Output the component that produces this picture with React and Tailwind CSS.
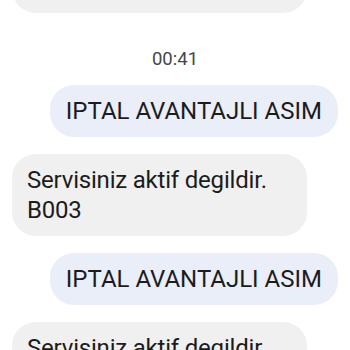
const messages = [
  { id: 1, from: "them", lines: ["Servisiniz aktif degildir.", "B003"] },
  { id: 2, time: "00:41" },
  { id: 3, from: "me", lines: ["IPTAL AVANTAJLI ASIM"] },
  { id: 4, from: "them", lines: ["Servisiniz aktif degildir.", "B003"] },
  { id: 5, from: "me", lines: ["IPTAL AVANTAJLI ASIM"] },
  { id: 6, from: "them", lines: ["Servisiniz aktif degildir.", "B003"] },
];

const Bubble = ({ msg, className = "" }) => {
  if (msg.time) {
    return (
      <div className="mt-[34px] mb-[14px] text-center text-[18.5px] leading-[24px] text-[#444746]">
        {msg.time}
      </div>
    );
  }
  const mine = msg.from === "me";
  return (
    <div className={`flex ${mine ? "justify-end" : "justify-start"} ${className}`}>
      <div
        className={
          mine
            ? "rounded-[24px] bg-[#e9eef9] px-4 py-[11px] text-[24px] leading-[30px] text-[#1c1c1c]"
            : "w-[295px] rounded-[24px] bg-[#f0f0f0] px-[15px] py-[11px] text-[24px] leading-[30px] tracking-[-0.2px] text-[#1c1c1c]"
        }
      >
        {msg.lines.map((line, i) => (
          <div key={i} className="whitespace-nowrap">{line}</div>
        ))}
      </div>
    </div>
  );
};

export default function App() {
  return (
    <div
      className="h-[350px] w-[350px] overflow-hidden bg-white px-3"
      style={{ fontFamily: "Roboto, 'Noto Sans', sans-serif" }}
    >
      <div className="-mt-[69px] flex flex-col">
        {messages.map((msg, idx) => (
          <Bubble
            key={msg.id}
            msg={msg}
            className={idx > 0 && messages[idx - 1].time ? "" : idx > 0 ? "mt-[17px]" : ""}
          />
        ))}
      </div>
    </div>
  );
}
